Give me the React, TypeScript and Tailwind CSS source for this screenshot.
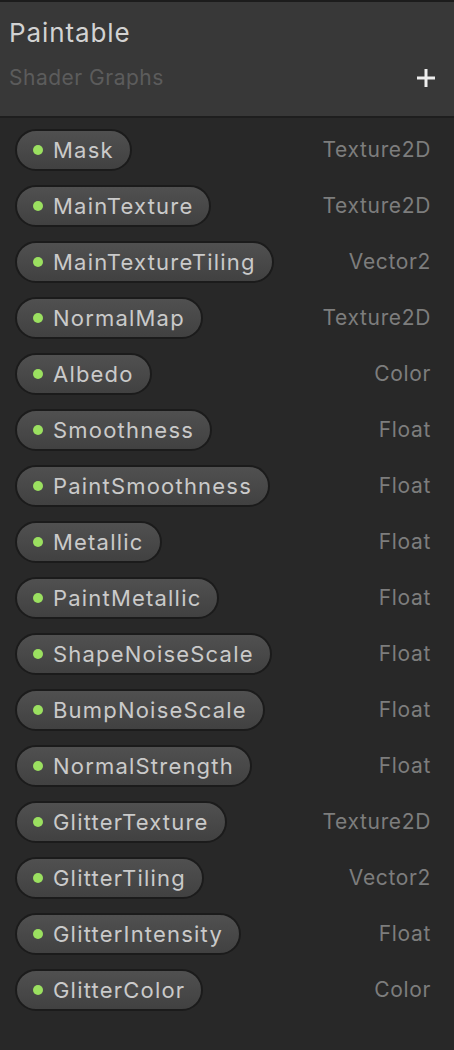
import React from "react";

const rows: [string, string][] = [
  ["Mask", "Texture2D"],
  ["MainTexture", "Texture2D"],
  ["MainTextureTiling", "Vector2"],
  ["NormalMap", "Texture2D"],
  ["Albedo", "Color"],
  ["Smoothness", "Float"],
  ["PaintSmoothness", "Float"],
  ["Metallic", "Float"],
  ["PaintMetallic", "Float"],
  ["ShapeNoiseScale", "Float"],
  ["BumpNoiseScale", "Float"],
  ["NormalStrength", "Float"],
  ["GlitterTexture", "Texture2D"],
  ["GlitterTiling", "Vector2"],
  ["GlitterIntensity", "Float"],
  ["GlitterColor", "Color"],
];

export default function App() {
  return (
    <div
      className="w-[454px] h-[1050px] bg-[#282828] flex flex-col overflow-hidden"
      style={{ fontFamily: "Inter, 'Noto Sans', sans-serif" }}
    >
      <div className="h-[2px] bg-[#1c1c1c]" />
      <div className="h-[114px] bg-[#383838] flex flex-col pl-[9px] pr-[18px]">
        <div className="text-[26px] leading-[30px] tracking-[0.9px] text-[#d2d2d2] mt-[16px]">Paintable</div>
        <div className="flex items-center justify-between mt-[17px]">
          <span className="text-[21px] leading-[26px] tracking-[0.5px] text-[#5c5c5c]">Shader Graphs</span>
          <svg width="20" height="20" viewBox="0 0 20 20" className="mt-[-1px]">
            <rect x="8.5" y="1" width="3" height="18" fill="#eeeeee" />
            <rect x="1" y="8.5" width="18" height="3" fill="#eeeeee" />
          </svg>
        </div>
      </div>
      <div className="h-[2px] bg-[#1e1e1e]" />
      <div className="flex flex-col gap-[14px] pt-[11px] pl-[15px] pr-[23px]">
        {rows.map(([name, type]) => (
          <div key={name} className="flex items-center justify-between h-[42px]">
            <div className="h-[42px] flex items-center rounded-full border-2 border-[#1b1b1b] bg-gradient-to-b from-[#505050] to-[#414141] pl-[16px] pr-[16px]">
              <span className="w-[10px] h-[10px] rounded-full bg-[#9be060] mr-[10px]" />
              <span className="text-[22px] leading-[26px] tracking-[1.2px] text-[#cacaca]">{name}</span>
            </div>
            <span className="text-[21px] leading-[26px] tracking-[0.65px] text-[#7d7d7d]">{type}</span>
          </div>
        ))}
      </div>
    </div>
  );
}
